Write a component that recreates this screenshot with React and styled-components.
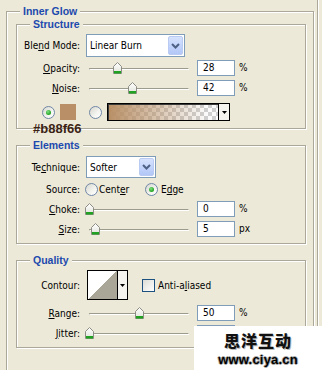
import React from 'react';
import styled, { createGlobalStyle } from 'styled-components';

const Global = createGlobalStyle`
  html, body { margin: 0; padding: 0; background: #ece9d8; }
  body {
    font-family: "DejaVu Sans Condensed", "Liberation Sans", sans-serif;
    font-size: 10px;
    color: #000;
  }
  * { box-sizing: border-box; }
`;

const Panel = styled.div`
  position: relative;
  width: 318px;
  height: 370px;
  overflow: hidden;
  padding: 5px 3px 0 6px;
  border-right: 1px solid #aca899;
  box-shadow: 1px 0 0 #fff;
`;

const Group = styled.fieldset`
  margin: ${(p) => p.$mt || 0}px 0 0;
  padding: ${(p) => p.$pad || '0'};
  border: 1px solid #aca899;
  box-shadow: inset 1px 1px 0 #fff, 1px 1px 0 #fff;
  min-width: 0;
`;

const Legend = styled.legend`
  margin-left: ${(p) => p.$ml}px;
  padding: 0 3px;
  font: bold 10.5px/13px "Liberation Sans", Arial, sans-serif;
  color: #1c4aae;
  background: #ece9d8;
`;

const Row = styled.div`
  display: flex;
  align-items: center;
  height: ${(p) => p.$h || 20}px;
  margin-top: ${(p) => p.$mt || 0}px;
  padding-left: ${(p) => p.$pl || 0}px;
`;

const Label = styled.span`
  flex: none;
  width: 63px;
  margin-right: ${(p) => (p.$gap != null ? p.$gap : 6)}px;
  text-align: right;
  white-space: nowrap;
`;

const SelectBox = styled.div`
  flex: none;
  display: flex;
  align-items: center;
  width: ${(p) => p.$w}px;
  height: ${(p) => p.$h}px;
  border: 1px solid #7f9db9;
  background: #fff;
  padding: 1px;
`;

const SelectText = styled.span`
  flex: 1;
  padding-left: 2px;
  white-space: nowrap;
`;

const SelectButton = styled.span`
  flex: none;
  width: 15px;
  height: 100%;
  display: flex;
  align-items: center;
  justify-content: center;
  border: 1px solid #b9cbf3;
  border-radius: 2px;
  background: linear-gradient(#d6e2fd, #c0d2fb 60%, #b3c7f6);
`;

const SliderWrap = styled.div`
  position: relative;
  flex: none;
  width: 100px;
  height: 20px;
  margin-left: 3px;
`;

const Track = styled.div`
  margin-top: 10px;
  height: 2px;
  border-top: 1px solid #9d9b8d;
  border-left: 1px solid #9d9b8d;
  border-bottom: 1px solid #fff;
  border-right: 1px solid #fff;
  border-radius: 1px;
`;

const Thumb = styled.svg`
  position: absolute;
  top: 4px;
`;

const NumInput = styled.div`
  flex: none;
  width: 38px;
  height: 16px;
  margin-left: 8px;
  border: 1px solid #7f9db9;
  background: #fff;
  padding-left: 5px;
  line-height: 14px;
`;

const Unit = styled.span`
  margin-left: 4px;
  margin-top: -2px;
`;

const RadioCircle = styled.span`
  flex: none;
  position: relative;
  width: 13px;
  height: 13px;
  border-radius: 50%;
  border: 1px solid #6f87a6;
  background: linear-gradient(135deg, #d8d8d0, #f4f4f0 60%, #fff);
  &::after {
    content: '';
    display: ${(p) => (p.$on ? 'block' : 'none')};
    position: absolute;
    left: 3px;
    top: 3px;
    width: 5px;
    height: 5px;
    border-radius: 50%;
    background: radial-gradient(circle at 40% 35%, #7ee07e, #21a121 70%);
  }
`;

const Option = styled.span`
  display: flex;
  align-items: center;
  width: ${(p) => (p.$w ? `${p.$w}px` : 'auto')};
`;

const OptText = styled.span`
  margin-left: ${(p) => p.$ml || 1}px;
`;

const Swatch = styled.span`
  flex: none;
  width: 16px;
  height: 16px;
  margin: 0 13px 0 5px;
  background: #b88f66;
`;

const GradientPicker = styled.div`
  flex: none;
  display: flex;
  width: 123px;
  height: 18px;
  margin-left: 5px;
  border: 1px solid #000;
`;

const GradientFill = styled.span`
  flex: 1;
  box-shadow: inset 1px 1px 0 #3a3a3a;
  background-image: linear-gradient(to right, rgba(184, 143, 102, 1), rgba(184, 143, 102, 0) 90%),
    conic-gradient(#cfcfcf 25%, #fbfbfb 0 50%, #cfcfcf 0 75%, #fbfbfb 0);
  background-size: 100% 100%, 8px 8px;
`;

const DropArrow = styled.span`
  flex: none;
  width: ${(p) => p.$w || 11}px;
  display: flex;
  align-items: center;
  justify-content: center;
  background: #f5f4ef;
  border-left: 1px solid #000;
`;

const ContourPicker = styled.div`
  flex: none;
  display: flex;
  height: 30px;
  margin-left: 1px;
  border: 1px solid #000;
`;

const ContourBox = styled.span`
  width: 29px;
  background: linear-gradient(to bottom right, #fff 50%, #a9a698 50%);
`;

const Check = styled.span`
  flex: none;
  width: 13px;
  height: 13px;
  margin-left: 14px;
  border: 1px solid #1c5180;
  background: linear-gradient(135deg, #dcdcd7, #fff);
`;

const CheckText = styled.span`
  margin-left: 3px;
`;

const Annotation = styled.div`
  position: absolute;
  left: 33px;
  top: 122px;
  font: bold 13px/13px "Liberation Sans", Arial, sans-serif;
  color: #3b2314;
`;

const Watermark = styled.div`
  position: absolute;
  right: 0;
  bottom: 0;
  width: 128px;
  height: 44px;
  background: #fff;
  display: flex;
  flex-direction: column;
  align-items: center;
  justify-content: center;
  gap: 3px;
`;

const WmTitle = styled.div`
  font: 900 16px/20px "Noto Sans CJK SC", sans-serif;
  letter-spacing: 1px;
  color: #111;
  text-shadow: 1px 1px 0 #bbb;
`;

const WmUrl = styled.div`
  font: bold 13px/13px "Liberation Sans", Arial, sans-serif;
  color: #000;
  letter-spacing: 0.2px;
  text-shadow: -1px 0 #aaa, 1px 0 #aaa, 0 -1px #aaa, 0 1px #aaa;
`;

const Chevron = () => (
  <svg width="9" height="6" viewBox="0 0 9 6">
    <path d="M1 1 L4.5 4.5 L8 1" fill="none" stroke="#4d6185" strokeWidth="2" />
  </svg>
);

const SmallTri = () => (
  <svg width="5" height="3" viewBox="0 0 5 3">
    <path d="M0 0 H5 L2.5 3 Z" fill="#000" />
  </svg>
);

function Select({ w, h, value }) {
  return (
    <SelectBox $w={w} $h={h}>
      <SelectText>{value}</SelectText>
      <SelectButton>
        <Chevron />
      </SelectButton>
    </SelectBox>
  );
}

function SliderRow({ label, value, pos, unit, mt, h }) {
  const left = Math.round(pos * 99) - 4;
  return (
    <Row $mt={mt} $h={h}>
      <Label>{label}</Label>
      <SliderWrap>
        <Track />
        <Thumb width="9" height="12" viewBox="0 0 9 12" style={{ left }}>
          <defs>
            <linearGradient id="thumbFill" x1="0" y1="0" x2="0" y2="1">
              <stop offset="0" stopColor="#ffffff" />
              <stop offset="1" stopColor="#e2e2da" />
            </linearGradient>
          </defs>
          <path d="M0.5 4.5 L4.5 0.5 L8.5 4.5 L8.5 11.5 L0.5 11.5 Z" fill="url(#thumbFill)" stroke="#8d8d85" />
          <rect x="1" y="9" width="7" height="2.5" fill="#21a121" />
        </Thumb>
      </SliderWrap>
      <NumInput>{value}</NumInput>
      {unit ? <Unit>{unit}</Unit> : null}
    </Row>
  );
}

export default function App() {
  return (
    <>
      <Global />
      <Panel>
        <Group $pad="0 7px 80px 9px">
          <Legend $ml={4}>Inner Glow</Legend>

          <Group $pad="0 0 7px 0">
            <Legend $ml={13}>Structure</Legend>
            <Row $mt={3} $h={23}>
              <Label>Ble<u>n</u>d Mode:</Label>
              <Select w={99} h={23} value="Linear Burn" />
            </Row>
            <SliderRow mt={1} label={<><u>O</u>pacity:</>} value="28" pos={0.28} unit="%" />
            <SliderRow label={<><u>N</u>oise:</>} value="42" pos={0.43} unit="%" />
            <Row $mt={5} $h={18} $pl={25}>
              <RadioCircle $on />
              <Swatch />
              <RadioCircle />
              <GradientPicker>
                <GradientFill />
                <DropArrow>
                  <SmallTri />
                </DropArrow>
              </GradientPicker>
            </Row>
          </Group>

          <Group $mt={10} $pad="0 0 4px 0">
            <Legend $ml={13}>Elements</Legend>
            <Row $mt={4} $h={22}>
              <Label>Te<u>c</u>hnique:</Label>
              <Select w={70} h={22} value="Softer" />
            </Row>
            <Row $mt={1} $h={20}>
              <Label $gap={5}>Source:</Label>
              <Option $w={60}>
                <RadioCircle />
                <OptText>Cent<u>e</u>r</OptText>
              </Option>
              <Option>
                <RadioCircle $on />
                <OptText $ml={3}>E<u>d</u>ge</OptText>
              </Option>
            </Row>
            <SliderRow label={<><u>C</u>hoke:</>} value="0" pos={0} unit="%" />
            <SliderRow label={<><u>S</u>ize:</>} value="5" pos={0.06} unit="px" />
          </Group>

          <Group $mt={10} $pad="0 0 4px 0">
            <Legend $ml={13}>Quality</Legend>
            <Row $mt={3} $h={30}>
              <Label>Contour:</Label>
              <ContourPicker>
                <ContourBox />
                <DropArrow $w={10}>
                  <SmallTri />
                </DropArrow>
              </ContourPicker>
              <Check />
              <CheckText>Anti-a<u>l</u>iased</CheckText>
            </Row>
            <SliderRow mt={3} label={<><u>R</u>ange:</>} value="50" pos={0.5} unit="%" />
            <SliderRow label={<><u>J</u>itter:</>} value="" pos={0} unit="" />
          </Group>
        </Group>
        <Annotation>#b88f66</Annotation>
      </Panel>
      <Watermark>
        <WmTitle>思洋互动</WmTitle>
        <WmUrl>www.ciya.cn</WmUrl>
      </Watermark>
    </>
  );
}
